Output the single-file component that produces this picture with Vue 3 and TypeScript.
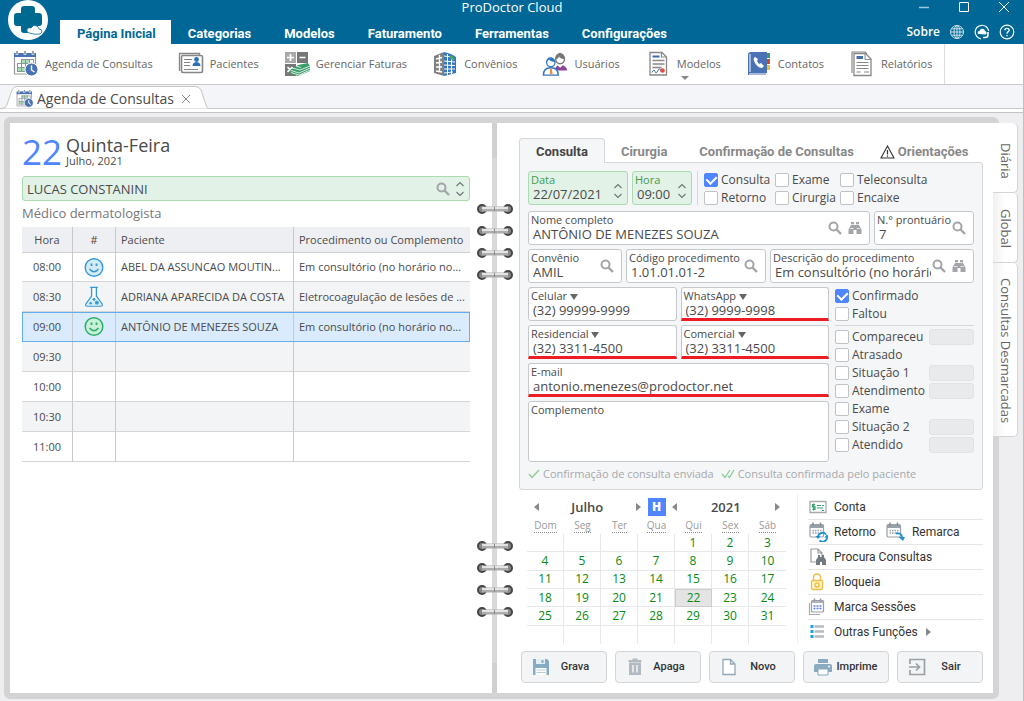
<script setup lang="ts">
import { ref } from 'vue'

interface Appointment {
  time: string
  icon?: string
  patient?: string
  detail?: string
  selected?: boolean
}

interface StatusItem {
  label: string
  checked?: boolean
  stamp?: boolean
}

const menus = ['Página Inicial', 'Categorias', 'Modelos', 'Faturamento', 'Ferramentas', 'Configurações']
const activeMenu = ref('Página Inicial')

const tools = [
  { label: 'Agenda de Consultas', icon: 'agenda' },
  { label: 'Pacientes', icon: 'patients' },
  { label: 'Gerenciar Faturas', icon: 'invoices' },
  { label: 'Convênios', icon: 'building' },
  { label: 'Usuários', icon: 'users' },
  { label: 'Modelos', icon: 'template', menu: true },
  { label: 'Contatos', icon: 'contacts' },
  { label: 'Relatórios', icon: 'reports' },
]

const appointments = ref<Appointment[]>([
  { time: '08:00', icon: 'smile-blue', patient: 'ABEL DA ASSUNCAO MOUTIN...', detail: 'Em consultório (no horário no...' },
  { time: '08:30', icon: 'flask', patient: 'ADRIANA APARECIDA DA COSTA', detail: 'Eletrocoagulação de lesões de ...' },
  { time: '09:00', icon: 'smile-green', patient: 'ANTÔNIO DE MENEZES SOUZA', detail: 'Em consultório (no horário no...', selected: true },
  { time: '09:30' },
  { time: '10:00' },
  { time: '10:30' },
  { time: '11:00' },
])

const formTabs = ['Consulta', 'Cirurgia', 'Confirmação de Consultas', 'Orientações']
const activeFormTab = ref('Consulta')

const kinds = ref([
  { label: 'Consulta', checked: true },
  { label: 'Exame', checked: false },
  { label: 'Teleconsulta', checked: false },
  { label: 'Retorno', checked: false },
  { label: 'Cirurgia', checked: false },
  { label: 'Encaixe', checked: false },
])

const phones = ref([
  { id: 'celular', label: 'Celular', value: '(32) 99999-9999', alert: false },
  { id: 'whatsapp', label: 'WhatsApp', value: '(32) 9999-9998', alert: true },
  { id: 'residencial', label: 'Residencial', value: '(32) 3311-4500', alert: true },
  { id: 'comercial', label: 'Comercial', value: '(32) 3311-4500', alert: true },
])

const presence = ref<StatusItem[]>([
  { label: 'Confirmado', checked: true },
  { label: 'Faltou', checked: false },
])
const progress = ref<StatusItem[]>([
  { label: 'Compareceu', checked: false, stamp: true },
  { label: 'Atrasado', checked: false },
  { label: 'Situação 1', checked: false, stamp: true },
  { label: 'Atendimento', checked: false, stamp: true },
  { label: 'Exame', checked: false },
  { label: 'Situação 2', checked: false, stamp: true },
  { label: 'Atendido', checked: false, stamp: true },
])

const weekdays = ['Dom', 'Seg', 'Ter', 'Qua', 'Qui', 'Sex', 'Sáb']
const firstWeekday = 4
const daysInMonth = 31
const weeks = Array.from({ length: 6 }, (_, w) =>
  Array.from({ length: 7 }, (_, d) => {
    const day = w * 7 + d - firstWeekday + 1
    return day > 0 && day <= daysInMonth ? day : null
  }),
)
const selectedDay = ref(22)

const actions = [
  { label: 'Grava', icon: 'save' },
  { label: 'Apaga', icon: 'trash' },
  { label: 'Novo', icon: 'file' },
  { label: 'Imprime', icon: 'printer' },
  { label: 'Sair', icon: 'exit' },
]
const sideTabs = ['Diária', 'Global', 'Consultas Desmarcadas']

const doctor = ref('LUCAS CONSTANINI')
const date = ref('22/07/2021')
const hour = ref('09:00')
const patientName = ref('ANTÔNIO DE MENEZES SOUZA')
const record = ref('7')
const insurance = ref('AMIL')
const procedureCode = ref('1.01.01.01-2')
const procedureName = ref('Em consultório (no horário normal)')
const email = ref('antonio.menezes@prodoctor.net')
const notes = ref('')
</script>

<template>
  <div class="app">
    <svg class="defs" aria-hidden="true">
      <symbol id="search" viewBox="0 0 14 14">
        <circle cx="5.5" cy="5.5" r="4" fill="none" stroke="#a3a5a8" stroke-width="2" />
        <path d="M8.5 8.5L13 13" stroke="#a3a5a8" stroke-width="2.4" />
      </symbol>
      <symbol id="binoculars" viewBox="0 0 14 14">
        <path d="M3 1h3v3h2V1h3v3l2.500 4.500V13H8.500V9h-3v4h-5V8.500L3 4z" fill="#a3a5a8" />
        <path d="M3 3.500h3M8 3.500h3M2 7.500h3.500M8.500 7.500H12" stroke="#fff" stroke-width=".7" />
      </symbol>
      <symbol id="updown" viewBox="0 0 10 16">
        <path d="M1.500 5L5 1.500 8.500 5M1.500 11L5 14.500 8.500 11" fill="none" stroke="#6e7476" stroke-width="1.100" />
      </symbol>
      <symbol id="agenda" viewBox="0 0 26 26">
        <path d="M1.500 3v20h16M22.500 3v11" fill="none" stroke="#999" stroke-width="1.200" />
        <path d="M1 2h22v4H1z" fill="#4a73b5" />
        <path d="M4 0v4M12 0v4M20 0v4" stroke="#fff" stroke-width="2.600" />
        <path d="M4 0v3.500M12 0v3.500M20 0v3.500" stroke="#69747f" stroke-width="1.300" />
        <path d="M4 16h13v4H4zM8 8h9v4H8z" fill="#a8ddb9" />
        <path d="M8.500 8v13M12.500 8v13M16.500 8v13M20.500 8v7M4.500 12v9M4 12.500h17M4 16.500h13M4 20.500h10M8 8.500h13" stroke="#8d9496" fill="none" />
        <circle cx="18.500" cy="18.500" r="6.500" fill="#4a73b5" stroke="#fff" />
        <path d="M18.500 14.500v4.500l3 2" fill="none" stroke="#fff" stroke-width="1.400" />
      </symbol>
      <symbol id="patients" viewBox="0 0 26 26">
        <path d="M1.500 20V2.500h20v3" fill="none" stroke="#858585" stroke-width="1.300" />
        <rect x="3.500" y="4.500" width="21" height="17" rx="1.500" fill="#fff" stroke="#858585" stroke-width="1.600" />
        <path d="M6 8.500h8M6 11.500h6M6 14.500h6M6 18.500h14" stroke="#858585" stroke-width="1.200" />
        <circle cx="18.500" cy="8.500" r="2.400" fill="#2871b8" />
        <path d="M14.500 15c0-2.500 2-4 4-4s4 1.500 4 4z" fill="#2871b8" />
      </symbol>
      <symbol id="invoices" viewBox="0 0 26 26">
        <path d="M1 1h11v11H1z" fill="#a9a9a9" />
        <path d="M13 1h11v11H13zM1 13h11v12H1z" fill="#777" />
        <path d="M3 6.500h7M6.500 3v7M15.500 6.500h6M3.500 16l5 5M8.500 16l-5 5" stroke="#fff" stroke-width="1.700" />
        <path d="M6 19l8-5 10-2 2 3v5l-12 5-7-2z" fill="#3a9c68" />
        <path d="M7 19.500l8 2.500 11-5M7 21.500l8 2.500 11-5M8 17l8 2 10-4M12 15l5 1.500" fill="none" stroke="#fff" stroke-width=".8" />
      </symbol>
      <symbol id="building" viewBox="0 0 26 26">
        <path d="M2 5l10-4v24L2 22z" fill="#808080" />
        <path d="M12 1l7 2 5 3v16l-12 3z" fill="#3477bd" />
        <path d="M4 8l6-1.500M4 12l6-1M4 16h6M4 20l6 1M7.500 4v17" stroke="#fff" stroke-width="1.300" />
        <path d="M12 5l8 1M12 10l11 1M12 14l11 .5M12 18h11M12 22l9-1M15.500 3v21M19.500 5v18" stroke="#fff" stroke-width="1" />
        <path d="M18 5l4 4" stroke="#44a869" stroke-width="2.500" />
      </symbol>
      <symbol id="users" viewBox="0 0 28 26">
        <path d="M14 19c0-3 3-5 6-5s7 2 7 6H16z" fill="#8b4598" />
        <path d="M17 12h5v3l-2.500 2L17 15z" fill="#fff" />
        <circle cx="19.500" cy="8" r="4.700" fill="#fff" stroke="#777" stroke-width="1.500" />
        <path d="M14.500 8c-1-9 11-9 10 0-3 0-5-1-6-3-1 2-2 3-4 3z" fill="#777" />
        <path d="M1.500 25c0-6 4-8 8-8s8 2 8 8z" fill="#fff" stroke="#3477bd" stroke-width="1.500" />
        <circle cx="9.500" cy="11.500" r="4.500" fill="#fff" stroke="#3477bd" stroke-width="1.400" />
        <path d="M4.500 11c0-7 9-7 10 0-4 0-6-1-7-3z" fill="#3477bd" />
        <path d="M8.500 18h2l1 6h-3z" fill="#ed8c42" />
      </symbol>
      <symbol id="template" viewBox="0 0 26 26">
        <path d="M5 1.500h12l4.500 4.500v18H5z" fill="#fff" stroke="#888" stroke-width="1.300" />
        <path d="M16.500 1.500V6H21.500" fill="none" stroke="#888" stroke-width="1.200" />
        <path d="M7.500 5.500h7" stroke="#3869ad" stroke-width="2" />
        <path d="M7.500 9.500h12M7.500 13h12M7.500 16.500h9" stroke="#888" stroke-width="1.300" />
        <path d="M7 21.500q2-4 3-1t3-1 3 1" fill="none" stroke="#3869ad" />
        <circle cx="17.500" cy="19.500" r="2.300" fill="#e3503e" />
      </symbol>
      <symbol id="contacts" viewBox="0 0 26 26">
        <path d="M20 2h4v5h-4z" fill="#3d986a" />
        <path d="M20 8h4v5h-4z" fill="#c7492e" />
        <path d="M20 14h4v5h-4z" fill="#e9bd42" />
        <path d="M5 1h16v21H5z" fill="#4a73b5" />
        <path d="M5 1Q2 1 2 4v20h18v-2H5z" fill="#4a73b5" />
        <path d="M4 3v18M3 23h17" stroke="#fff" />
        <path d="M9 6q-2 1-1 4 3 7 8 7l2-2-3-3-2 1-2-3 1-2z" fill="#fff" />
      </symbol>
      <symbol id="reports" viewBox="0 0 26 26">
        <path d="M3 22V1h13l2 2" fill="none" stroke="#888" stroke-width="1.200" />
        <path d="M5 2.500h11.500L22 8v16.500H5z" fill="#fff" stroke="#888" stroke-width="1.300" />
        <path d="M16 3v5.500h6" fill="none" stroke="#888" />
        <path d="M7.500 6.500h6.500" stroke="#4470aa" stroke-width="3" />
        <path d="M7.500 11.500h12M7.500 14.500h12M7.500 17.500h12M7.500 21h4M15 21h5" stroke="#888" stroke-width="1.200" />
      </symbol>
      <symbol id="smile-blue" viewBox="0 0 20 20">
        <circle cx="10" cy="10" r="8.800" fill="#d4ecf4" stroke="#3698d8" stroke-width="1.400" />
        <path d="M7.500 6v2.500M12.500 6v2.500" stroke="#3698d8" stroke-width="1.800" />
        <path d="M5.500 11.500q4.500 5.500 9 0" fill="none" stroke="#3698d8" stroke-width="1.400" />
      </symbol>
      <symbol id="smile-green" viewBox="0 0 20 20">
        <circle cx="10" cy="10" r="8.800" fill="#c9f0d8" stroke="#27b066" stroke-width="1.500" />
        <path d="M7.500 6v2.500M12.500 6v2.500" stroke="#27b066" stroke-width="1.800" />
        <path d="M5.500 11.500q4.500 5.500 9 0" fill="none" stroke="#27b066" stroke-width="1.400" />
      </symbol>
      <symbol id="flask" viewBox="0 0 20 22">
        <path d="M7.500 1.500v9L1.500 19q-.8 2 1.500 2h14q2.300 0 1.500-2l-6-8.500v-9M6 1.500h8" fill="#fff" stroke="#3698d8" stroke-width="1.400" />
        <path d="M6 14h8l4 5.500-1 1H3l-1-1z" fill="#d4ecf4" />
        <circle cx="10" cy="14" r="1.500" fill="#3698d8" />
        <circle cx="6.500" cy="18" r="1.300" fill="#3698d8" />
        <circle cx="13" cy="17.500" r="2" fill="#3698d8" />
      </symbol>
      <symbol id="save" viewBox="0 0 18 18">
        <path d="M1 1h14l2 2v14H1z" fill="#85abc5" />
        <path d="M4 1h9v5H4z" fill="#e4eef4" />
        <path d="M9.500 2h2v3h-2z" fill="#85abc5" />
        <path d="M3.500 10h11v7h-11z" fill="#fff" />
        <path d="M4.500 12h9M4.500 14.500h9" stroke="#b6ccda" />
      </symbol>
      <symbol id="trash" viewBox="0 0 18 18">
        <path d="M3 4.500h12V17H3z" fill="#b2b9c0" />
        <path d="M2.500 3h13M6.500 1.500h5" stroke="#b2b9c0" stroke-width="2" />
        <path d="M7 7v7.500M11 7v7.500" stroke="#f3f5f7" stroke-width="1.500" />
      </symbol>
      <symbol id="file" viewBox="0 0 18 18">
        <path d="M3 1.500h7.500L15 6v10.500H3zM10.500 1.500V6H15" fill="#fff" stroke="#93a8b5" stroke-width="1.300" />
      </symbol>
      <symbol id="printer" viewBox="0 0 18 18">
        <path d="M4 1h10v4H4z" fill="#8aaabf" />
        <path d="M2 6h14q2 0 2 2v6H0V8q0-2 2-2z" fill="#8aaabf" />
        <path d="M4 11h10v6H4z" fill="#fff" stroke="#8aaabf" />
        <circle cx="15" cy="8.500" r="1" fill="#fff" />
      </symbol>
      <symbol id="exit" viewBox="0 0 18 18">
        <path d="M2 6V1.500h14.500v15H2V12M1 9h10M8 5.500L11.500 9 8 12.500" fill="none" stroke="#9ba0a5" stroke-width="1.700" />
      </symbol>
      <symbol id="calendar" viewBox="0 0 20 20">
        <rect x="2" y="2.500" width="13.500" height="12.500" rx="1.500" fill="#fff" stroke="#9aa0a8" stroke-width="1.200" />
        <path d="M2 3h13.500v3H2z" fill="#9aa0a8" />
        <path d="M5 .5V4M12.500 .5V4" stroke="#858b93" stroke-width="1.500" />
        <path d="M4.500 8.500h9M4.500 11h9" stroke="#9aa0a8" stroke-width="1.500" stroke-dasharray="1.500 1" />
      </symbol>
    </svg>

    <header class="titlebar">
      <svg class="logo" viewBox="0 0 42 42" role="img" aria-label="ProDoctor">
        <circle cx="21" cy="21" r="20" fill="#fff" />
        <path d="M17 7h8q3 0 3 3v4h4q3 0 3 3v7q0 3-3 3h-4v4q0 3-3 3h-8q-3 0-3-3v-4h-4q-3 0-3-3v-7q0-3 3-3h4v-4q0-3 3-3z" fill="#00698f" />
        <path d="M22 34q-3-1-2-4 2-2 4-1 2-4 6-2 2 2 2 3 3 0 3 3l-2 2q-4 1-11-1z" fill="#fff" stroke="#00698f" stroke-width=".8" />
      </svg>
      <div class="caption">
        <h1>ProDoctor Cloud</h1>
        <div class="window-buttons">
          <button type="button" aria-label="Minimizar"><svg viewBox="0 0 12 12"><path d="M1 6.500h10" stroke="#9cc7dc" stroke-width="1.500" /></svg></button>
          <button type="button" aria-label="Maximizar"><svg viewBox="0 0 12 12"><path d="M1.500 1.500h9v9h-9z" fill="none" stroke="#fff" /></svg></button>
          <button type="button" aria-label="Fechar"><svg viewBox="0 0 12 12"><path d="M1 1l10 10M11 1L1 11" stroke="#fff" /></svg></button>
        </div>
      </div>
      <div class="menubar">
        <nav>
          <button v-for="m in menus" :key="m" type="button" :class="{ active: m === activeMenu }" @click="activeMenu = m">{{ m }}</button>
        </nav>
        <div class="help">
          <a href="#sobre">Sobre</a>
          <button type="button" aria-label="Idioma"><svg viewBox="0 0 16 16"><g fill="none" stroke="#cbe2ed"><circle cx="8" cy="8" r="6.500" /><ellipse cx="8" cy="8" rx="3" ry="6.500" /><path d="M8 1.500v13M1.500 8h13M2.500 4.800h11M2.500 11.200h11" /></g></svg></button>
          <button type="button" aria-label="Suporte"><svg viewBox="0 0 16 16"><path d="M7 14.800A6.800 6.800 0 1 1 14.700 7" fill="none" stroke="#fff" stroke-width="1.200" /><path d="M4 10q-1-3 1.500-3 1-3 4-2 1.500 1 1.500 2 2.500 1 1 3.500z" fill="#fff" /><path d="M14 8v3q0 2.500-3 2.500H9" fill="none" stroke="#fff" stroke-width="1.600" /></svg></button>
          <button type="button" aria-label="Ajuda"><svg viewBox="0 0 16 16"><circle cx="8" cy="8" r="6.800" fill="none" stroke="#fff" stroke-width="1.200" /><path d="M5.800 6.300q.2-2 2.200-2t2.200 1.800q0 1-1.200 1.800-1 .7-1 1.900M8 11v1.300" fill="none" stroke="#fff" stroke-width="1.300" /></svg></button>
        </div>
      </div>
    </header>

    <div class="toolbar" role="toolbar">
      <button v-for="t in tools" :key="t.label" type="button" class="tool">
        <svg><use :href="'#' + t.icon" /></svg>
        <span>{{ t.label }}</span>
        <i v-if="t.menu" class="more"></i>
      </button>
    </div>

    <div class="doc-tabs">
      <div class="doc-tab">
        <svg class="shape" viewBox="0 0 208 24" preserveAspectRatio="none"><path d="M0 23.500Q4 23 5 20L10 5Q12 1.500 15 1.500H195Q199 1.500 201 5L206 20Q207 23 208 23.500" fill="#fff" stroke="#c4c4c4" /></svg>
        <svg class="doc-icon"><use href="#agenda" /></svg>
        <span>Agenda de Consultas</span>
        <button type="button" aria-label="Fechar aba"><svg viewBox="0 0 10 10"><path d="M1 1l8 8M9 1L1 9" stroke="#888" /></svg></button>
      </div>
    </div>

    <main class="workspace">
      <div class="book">
        <section class="page left">
          <div class="date-head">
            <strong>22</strong>
            <div>
              <h2>Quinta-Feira</h2>
              <p>Julho, 2021</p>
            </div>
          </div>
          <div class="doctor">
            <input v-model="doctor" type="text" aria-label="Médico" />
            <svg class="s14"><use href="#search" /></svg>
            <svg class="ud"><use href="#updown" /></svg>
          </div>
          <p class="specialty">Médico dermatologista</p>
          <table class="schedule">
            <colgroup><col class="c-time" /><col class="c-icon" /><col class="c-name" /><col /></colgroup>
            <thead>
              <tr><th>Hora</th><th>#</th><th class="l">Paciente</th><th class="l">Procedimento ou Complemento</th></tr>
            </thead>
            <tbody>
              <tr v-for="a in appointments" :key="a.time" :class="{ selected: a.selected }">
                <td>{{ a.time }}</td>
                <td><svg v-if="a.icon"><use :href="'#' + a.icon" /></svg></td>
                <td class="l">{{ a.patient }}</td>
                <td class="l">{{ a.detail }}</td>
              </tr>
            </tbody>
          </table>
        </section>

        <div class="spine">
          <div v-for="g in 2" :key="g" class="rings">
            <svg v-for="n in 4" :key="n" viewBox="0 0 36 12">
              <circle cx="5" cy="6" r="4" fill="#888" stroke="#454545" stroke-width="2" />
              <circle cx="31" cy="6" r="4" fill="#888" stroke="#454545" stroke-width="2" />
              <path d="M5 6h26" stroke="#adadad" stroke-width="5" />
              <path d="M5 5h26" stroke="#e4e4e4" stroke-width="2" />
              <path d="M17.500 4v4" stroke="#888" />
            </svg>
          </div>
        </div>

        <section class="page right">
          <div class="form-tabs" role="tablist">
            <button v-for="t in formTabs" :key="t" type="button" role="tab" :class="{ active: t === activeFormTab }" @click="activeFormTab = t">
              <svg v-if="t === 'Orientações'" viewBox="0 0 15 14"><path d="M7.500 1L14 13H1z" fill="none" stroke="#333" stroke-width="1.100" /><path d="M7.500 5v4.500M7.500 10.500v1.300" stroke="#333" stroke-width="1.200" /></svg>
              {{ t }}
            </button>
          </div>
          <form class="panel" @submit.prevent>
            <div class="row first">
              <div class="field green w-date">
                <label for="data">Data</label><input id="data" v-model="date" type="text" />
                <div class="icons"><svg class="ud"><use href="#updown" /></svg></div>
              </div>
              <div class="field green w-hour">
                <label for="hora">Hora</label><input id="hora" v-model="hour" type="text" />
                <div class="icons"><svg class="ud"><use href="#updown" /></svg></div>
              </div>
              <div class="kinds">
                <label v-for="k in kinds" :key="k.label" class="check"><input v-model="k.checked" type="checkbox" />{{ k.label }}</label>
              </div>
            </div>
            <div class="row">
              <div class="field grow">
                <label for="nome">Nome completo</label><input id="nome" v-model="patientName" type="text" />
                <div class="icons"><svg class="s14"><use href="#search" /></svg><svg class="s14"><use href="#binoculars" /></svg></div>
              </div>
              <div class="field w-date">
                <label for="prontuario">N.° prontuário</label><input id="prontuario" v-model="record" type="text" />
                <div class="icons"><svg class="s14"><use href="#search" /></svg></div>
              </div>
            </div>
            <div class="row">
              <div class="field w-plan">
                <label for="convenio">Convênio</label><input id="convenio" v-model="insurance" type="text" />
                <div class="icons"><svg class="s14"><use href="#search" /></svg></div>
              </div>
              <div class="field w-code">
                <label for="codigo">Código procedimento</label><input id="codigo" v-model="procedureCode" type="text" />
                <div class="icons"><svg class="s14"><use href="#search" /></svg></div>
              </div>
              <div class="field grow clipped">
                <label for="descricao">Descrição do procedimento</label><input id="descricao" v-model="procedureName" type="text" />
                <div class="icons"><svg class="s14"><use href="#search" /></svg><svg class="s14"><use href="#binoculars" /></svg></div>
              </div>
            </div>
            <div class="details">
              <div class="contact">
                <div v-for="p in phones" :key="p.id" class="field" :class="{ alert: p.alert }">
                  <label :for="p.id">{{ p.label }} <i class="down"></i></label><input :id="p.id" v-model="p.value" type="tel" />
                </div>
                <div class="field alert wide">
                  <label for="email">E-mail</label><input id="email" v-model="email" type="email" />
                </div>
                <div class="field notes wide">
                  <label for="complemento">Complemento</label><textarea id="complemento" v-model="notes"></textarea>
                </div>
              </div>
              <div class="status">
                <div v-for="s in presence" :key="s.label" class="status-row">
                  <label class="check"><input v-model="s.checked" type="checkbox" />{{ s.label }}</label>
                </div>
                <hr />
                <div v-for="s in progress" :key="s.label" class="status-row">
                  <label class="check"><input v-model="s.checked" type="checkbox" />{{ s.label }}</label>
                  <input v-if="s.stamp" type="text" class="stamp" disabled :aria-label="'Horário de ' + s.label" />
                </div>
              </div>
            </div>
            <p class="legend">
              <svg viewBox="0 0 12 10"><path d="M1 5l3 3.500L11 1" /></svg><span>Confirmação de consulta enviada</span>
              <svg viewBox="0 0 14 10"><path d="M1 5l3 3.500L9 1M7 7l1.500 1.500L13 1" /></svg><span>Consulta confirmada pelo paciente</span>
            </p>
          </form>

          <div class="lower">
            <div class="calendar">
              <div class="cal-head">
                <button type="button" aria-label="Mês anterior"><i class="prev"></i></button>
                <b>Julho</b>
                <button type="button" aria-label="Próximo mês"><i class="next"></i></button>
                <button type="button" class="today">H</button>
                <button type="button" aria-label="Ano anterior"><i class="prev"></i></button>
                <b>2021</b>
                <button type="button" aria-label="Próximo ano"><i class="next"></i></button>
              </div>
              <table>
                <thead><tr><th v-for="w in weekdays" :key="w"><span>{{ w }}</span></th></tr></thead>
                <tbody>
                  <tr v-for="(week, i) in weeks" :key="i">
                    <td v-for="(d, j) in week" :key="j" :class="{ current: d === selectedDay }" @click="d && (selectedDay = d)">{{ d }}</td>
                  </tr>
                </tbody>
              </table>
            </div>
            <ul class="links">
              <li>
                <button type="button">
                  <svg viewBox="0 0 20 20"><path d="M2 4.500h16v11H2z" fill="#fff" stroke="#a6abaf" stroke-width="1.300" /><path d="M7 7.500H4.500v2.300H7v2.700H4.300M5.700 6.500v7M9 8.500h4M9 11h6M14 8.500h2M14 13.500h2" fill="none" stroke="#35a470" stroke-width="1.200" /></svg>Conta
                </button>
              </li>
              <li>
                <button type="button">
                  <svg viewBox="0 0 20 20"><use href="#calendar" /><path d="M10 15a4.500 4.500 0 0 1 8-2.500M19 15a4.500 4.500 0 0 1-7.500 3.500" fill="none" stroke="#1b91cf" stroke-width="1.800" /><path d="M7.500 14h5L10 17zM16.500 15.500h4L19 12z" fill="#1b91cf" /></svg>Retorno
                </button>
                <button type="button" class="second">
                  <svg viewBox="0 0 20 20"><use href="#calendar" /><path d="M11 11.500q6-1 6 4" fill="none" stroke="#1b91cf" stroke-width="1.800" /><path d="M13.500 15h6.500l-2 4z" fill="#1b91cf" /></svg>Remarca
                </button>
              </li>
              <li>
                <button type="button">
                  <svg viewBox="0 0 20 20"><path d="M3 2h7l4 4v4M10 2v4h4M3 2v13h5" fill="none" stroke="#989da2" stroke-width="1.200" /><path d="M10 8h2v2h2V8h2v2l2 3v5h-4v-3h-2v3H8v-5l2-3z" fill="#737a80" /></svg>Procura Consultas
                </button>
              </li>
              <li>
                <button type="button">
                  <svg viewBox="0 0 20 20"><rect x="3.500" y="8.500" width="11" height="9" rx="1.500" fill="#fff3c4" stroke="#efbd45" stroke-width="1.300" /><path d="M5.500 8V6q0-4 3.500-4t3.500 4v2" fill="none" stroke="#efbd45" stroke-width="1.400" /><circle cx="9" cy="13" r="2" fill="none" stroke="#efbd45" stroke-width="1.300" /></svg>Bloqueia
                </button>
              </li>
              <li>
                <button type="button">
                  <svg viewBox="0 0 20 20"><path d="M1.500 6v11.500H12" fill="none" stroke="#a6abaf" stroke-width="1.200" /><rect x="3.500" y="3.500" width="12" height="11.500" rx="1" fill="#fff" stroke="#9aa0a8" stroke-width="1.200" /><path d="M3.500 5h12M6.500 1.500V5M12.500 1.500V5" stroke="#9aa0a8" stroke-width="1.600" /><path d="M5.500 9h8M5.500 11.500h8" stroke="#5a80ef" stroke-width="1.600" stroke-dasharray="2 1" /></svg>Marca Sessões
                </button>
              </li>
              <li>
                <button type="button">
                  <svg viewBox="0 0 20 20"><path d="M6.500 4.500H16M6.500 9.500H16M6.500 14.500H16" stroke="#b8bcc0" stroke-width="2.500" /><path d="M2.500 4.500H5.500M2.500 9.500H5.500M2.500 14.500H5.500" stroke="#1ba4e0" stroke-width="3" /></svg>Outras Funções <i class="next"></i>
                </button>
              </li>
            </ul>
          </div>

          <div class="actions">
            <button v-for="a in actions" :key="a.label" type="button">
              <svg><use :href="'#' + a.icon" /></svg><span>{{ a.label }}</span>
            </button>
          </div>
        </section>
      </div>
      <aside class="side-tabs">
        <button v-for="(s, i) in sideTabs" :key="s" type="button" :class="{ active: i === 0 }">{{ s }}</button>
      </aside>
    </main>
  </div>
</template>

<style>
body { margin: 0; background: #eeeef0; }
</style>

<style scoped>
* { box-sizing: border-box; }
.app {
  min-height: 100vh;
  display: flex;
  flex-direction: column;
  border-right: 1px solid #bfc0c2;
  font: 12px/16px "Open Sans", "Noto Sans", sans-serif;
  color: #4a4a4a;
}
.defs { position: absolute; width: 0; height: 0; }
svg { display: block; flex: none; }
h1, h2, p, ul { margin: 0; padding: 0; font-weight: 400; }
button { font: inherit; color: inherit; background: none; border: 0; padding: 0; cursor: pointer; }
input, textarea { font: inherit; color: inherit; border: 0; background: none; padding: 0; margin: 0; outline: 0; min-width: 0; }
.s14 { width: 14px; height: 14px; }
.ud { width: 10px; height: 16px; }

.titlebar { position: relative; height: 44px; background: #006796; color: #fff; display: flex; flex-direction: column; justify-content: space-between; margin-right: -1px; }
.logo { position: absolute; left: 7px; top: -1px; width: 42px; height: 42px; z-index: 1; }
.caption { height: 16px; display: flex; justify-content: center; position: relative; }
.caption h1 { font-size: 13px; line-height: 15px; }
.window-buttons { position: absolute; right: 14px; top: 1px; display: flex; gap: 28px; }
.window-buttons svg { width: 12px; height: 12px; }
.menubar { height: 24px; display: flex; justify-content: space-between; padding: 0 9px 0 60px; }
nav { display: flex; gap: 1px; }
nav button { font: 700 13px/24px Roboto, sans-serif; padding: 2px 16px 0; height: 24px; }
nav button.active { background: #fff; color: #006796; padding: 2px 15px 0 17px; }
.help { display: flex; align-items: center; gap: 9px; font: 600 12px/16px "Open Sans", sans-serif; }
.help a { color: #fff; text-decoration: none; }
.help svg { width: 16px; height: 16px; }

.toolbar { display: flex; align-items: stretch; gap: 25px; height: 41px; padding-left: 13px; background: #fff; border-bottom: 1px solid #c9c9c9; color: #666; font-size: 11px; }
.tool { position: relative; display: flex; align-items: center; gap: 6px; white-space: nowrap; }
.tool svg { width: 26px; height: 26px; }
.tool:last-child { padding-right: 12px; border-right: 1px solid #ddd; }
.more { position: absolute; left: 36px; bottom: 4px; border: 4px solid transparent; border-top-color: #888; border-bottom: 0; }

.doc-tabs { height: 28px; background: linear-gradient(#f4f5f8 23px, #c9c9c9 23px, #c9c9c9 24px, #fff 24px, #fff 27px, #c4c4c4 27px); padding-left: 2px; display: flex; align-items: flex-start; }
.doc-tab { position: relative; height: 24px; display: flex; align-items: center; gap: 3px; padding: 4px 17px 0 14px; font-size: 14px; line-height: 20px; white-space: nowrap; }
.doc-tab > * { position: relative; }
.doc-tab .shape { position: absolute; inset: 0; width: 100%; height: 24px; }
.doc-icon { width: 18px; height: 18px; }
.doc-tab button { margin-left: 4px; }
.doc-tab button svg { width: 10px; height: 10px; }

.workspace { flex: 1; display: flex; padding: 4px 5px 2px 4px; background: #eeeef0; }
.book { flex: 1; min-width: 0; display: grid; grid-template-columns: minmax(0, 482fr) 5px minmax(0, 496fr); border: 6px solid #d4d4d4; border-radius: 6px; }
.page { background: #fff; }
.page.left { padding: 12px 22px 0 12px; }
.date-head { display: flex; align-items: center; gap: 4px; height: 33px; }
.date-head strong { font-size: 35px; line-height: 33px; font-weight: 400; color: #4f85ff; }
.date-head h2 { font-size: 18px; line-height: 19px; }
.date-head p { font-size: 11px; line-height: 12px; }
.doctor { display: flex; align-items: center; gap: 5px; height: 25px; margin-top: 8px; padding: 0 4px; border: 1px solid #a9dab0; border-radius: 3px; background: #e2f2e7; font-size: 13px; }
.doctor input { flex: 1; }
.specialty { font-size: 13px; line-height: 20px; margin: 2px 0 4px; color: #777; }
.schedule { width: 100%; table-layout: fixed; border-collapse: separate; border-spacing: 0; font-size: 11px; }
.c-time { width: 51px; }
.c-icon { width: 43px; }
.c-name { width: 178px; }
.schedule th { height: 26px; background: #eeeff2; font-weight: 400; border-bottom: 1px solid #d0d0d0; }
.schedule th, .schedule td { padding: 0; text-align: center; border-right: 1px solid #c9c9c9; overflow: hidden; white-space: nowrap; text-overflow: ellipsis; }
.schedule td { height: 30px; border-bottom: 1px solid #d5d5d5; }
.schedule tbody tr:first-child td { height: 29px; }
.schedule th:last-child, .schedule td:last-child { border-right: 0; }
.schedule .l { text-align: left; padding: 0 0 0 5px; }
.schedule tbody tr:nth-child(even) { background: #f3f4f6; }
.schedule td svg { width: 20px; height: 21px; margin: 0 auto; }
.schedule tr.selected { background: #d9ebfd; outline: 1px solid #64aef0; outline-offset: -1px; }
.schedule tr.selected td { border-bottom-color: #64aef0; }

.spine { position: relative; background: linear-gradient(#d0d0d0 35px, #d9d9d9 35px, #d9d9d9 540px, #d0d0d0 540px); }
.rings { position: absolute; z-index: 1; left: -15px; top: 80px; display: grid; gap: 10px; }
.rings + .rings { top: 417px; }
.rings svg { width: 36px; height: 12px; }

.page.right { padding: 15px 10px 10px 22px; }
.form-tabs { display: flex; height: 25px; margin-bottom: -1px; position: relative; font: 700 13px/24px Roboto, sans-serif; color: #888; white-space: nowrap; }
.form-tabs button { display: flex; align-items: center; gap: 4px; padding: 1px 15px 0; border: 1px solid transparent; border-bottom: 0; }
.form-tabs button:last-child { padding: 1px 0 0 9px; gap: 3px; }
.form-tabs button.active { background: #f5f6f8; border-color: #d5d8da; border-radius: 4px 4px 0 0; color: #444; padding: 1px 16px 0; }
.form-tabs svg { width: 15px; height: 14px; }
.panel { border: 1px solid #d5d8da; border-radius: 0 3px 3px 3px; background: #f5f6f8; padding: 8px 8px 7px; }
.row { display: flex; gap: 4px; margin-bottom: 4px; }
.row.first { margin-bottom: 6px; }
.field { position: relative; height: 34px; display: flex; flex-direction: column; background: #fff; border: 1px solid #c6c9cb; border-radius: 3px; padding: 1px 0 0 2px; }
.field label { font-size: 11px; line-height: 14px; white-space: nowrap; }
.field input { font-size: 13px; line-height: 15px; height: 15px; width: 100%; padding-left: 2px; }
.field.clipped input { width: 158px; }
.field.green { background: #e2f2e7; border-color: #a9dab0; }
.field.green label { color: #3f9a50; }
.field.alert { border-bottom: 3px solid #ee1c25; border-bottom-left-radius: 0; border-bottom-right-radius: 0; }
.field .icons { position: absolute; right: 7px; top: 0; bottom: 0; display: flex; align-items: center; gap: 6px; }
.field.green .icons { right: 4px; top: 6px; }
.w-date { width: 100px; }
.w-hour { width: 60px; }
.w-plan { width: 94px; }
.w-code { width: 140px; }
.grow { flex: 1; min-width: 0; }
.kinds { display: grid; grid-template-columns: 71px 65px auto; align-items: center; margin-left: 1px; padding-left: 6px; border-left: 1px solid #d5d8da; row-gap: 0; height: 34px; }
.check { display: flex; align-items: center; gap: 3px; height: 18px; font-size: 12px; white-space: nowrap; }
.check input { appearance: none; flex: none; width: 14px; height: 14px; background: #fff; border: 1px solid #bfc3c6; border-radius: 2px; position: relative; }
.check input:checked { background: #4f85ff; border-color: #4f85ff; }
.check input:checked::after { content: ""; position: absolute; left: 3px; top: 0; width: 5px; height: 8px; border: solid #fff; border-width: 0 2px 2px 0; transform: rotate(45deg); }
.details { display: grid; grid-template-columns: minmax(0, 301fr) minmax(0, 139fr); gap: 6px; }
.contact { display: grid; grid-template-columns: 1fr 1fr; gap: 4px; }
.wide { grid-column: 1 / -1; }
.field.notes { height: 61px; }
.notes textarea { flex: 1; resize: none; font-size: 13px; }
.down { display: inline-block; border: 4px solid transparent; border-top: 6px solid #666; border-bottom: 0; }
.status hr { border: 0; border-top: 1px solid #d5d8da; margin: 2px 0; }
.status-row { display: flex; justify-content: space-between; align-items: center; height: 18px; }
.stamp { width: 45px; height: 16px; flex: none; border: 1px solid #e0e2e4; border-radius: 3px; background: #e8eaec; }
.legend { display: flex; align-items: center; gap: 3px; margin-top: 4px; font-size: 11px; color: #a6a9ab; white-space: nowrap; }
.legend svg { width: 12px; height: 10px; fill: none; stroke: #8fca98; stroke-width: 1.3px; }
.legend span + svg { margin-left: 4px; width: 14px; }

.lower { display: grid; grid-template-columns: minmax(0, 259fr) minmax(0, 186fr); gap: 11px; padding: 4px 0 0 8px; }
.calendar { padding-top: 4px; }
.cal-head { display: grid; grid-template-columns: 18px 1fr 18px 18px 18px 1fr 18px; align-items: center; justify-items: center; height: 18px; }
.cal-head b { font-weight: 600; font-size: 13px; }
.today { width: 18px; height: 18px; background: #4f85ff; color: #fff; font-weight: 800; font-size: 12px; line-height: 18px; }
.prev, .next { display: inline-block; border: 4px solid transparent; }
.prev { border-right: 5px solid #888; border-left: 0; }
.next { border-left: 5px solid #888; border-right: 0; }
.calendar table { width: 100%; height: 128px; table-layout: fixed; border-collapse: separate; border-spacing: 0; }
.calendar th { height: 18px; padding: 0; font-size: 10px; line-height: 12px; font-weight: 400; color: #999; vertical-align: middle; }
.calendar th span { border-bottom: 1px dotted #888; }
.calendar td { height: 18px; padding: 0; text-align: center; line-height: 16px; color: #0a8a14; border-right: 1px solid #e6e8ea; border-bottom: 1px solid #e6e8ea; }
.calendar td:last-child { border-right: 0; }
.calendar tr:last-child td { border-bottom: 0; }
.calendar td.current { background: #e4e4e4; border: 1px solid #ccc; }
.links { list-style: none; position: relative; padding-left: 10px; border-left: 1px solid #eceef0; font: 12px/16px Roboto, sans-serif; color: #333; }
.links li { display: flex; align-items: center; height: 25px; border-top: 1px solid #e4e6e8; }
.links li:first-child { border-top-color: transparent; }
.links button { display: flex; align-items: center; gap: 6px; white-space: nowrap; }
.links .second { margin-left: 9px; gap: 7px; }
.links svg { width: 20px; height: 20px; }
.links .next { margin-left: 2px; }

.actions { display: grid; grid-template-columns: repeat(5, 1fr); gap: 8px; margin-top: 7px; padding-left: 2px; }
.actions button { display: flex; align-items: center; height: 32px; padding: 0 6px 0 10px; border: 1px solid #d3d6d9; border-radius: 4px; background: #f2f4f6; font: 500 11px/16px Roboto, sans-serif; color: #333; }
.actions svg { width: 18px; height: 18px; }
.actions span { flex: 1; text-align: center; }

.side-tabs { width: 25px; margin: 6px 0 0 -6px; position: relative; display: flex; flex-direction: column; }
.side-tabs button { writing-mode: vertical-rl; height: 70px; width: 25px; border: 1px solid #d5d5d5; border-left: 0; border-top: 0; border-radius: 0 5px 5px 0; padding-top: 2px; background: linear-gradient(90deg, #f0f0f0, #fff 12px); font-size: 13px; line-height: 23px; color: #666; text-align: center; }
.side-tabs button.active { background: #fff; padding-top: 6px; }
.side-tabs button:last-child { height: 174px; }
</style>
